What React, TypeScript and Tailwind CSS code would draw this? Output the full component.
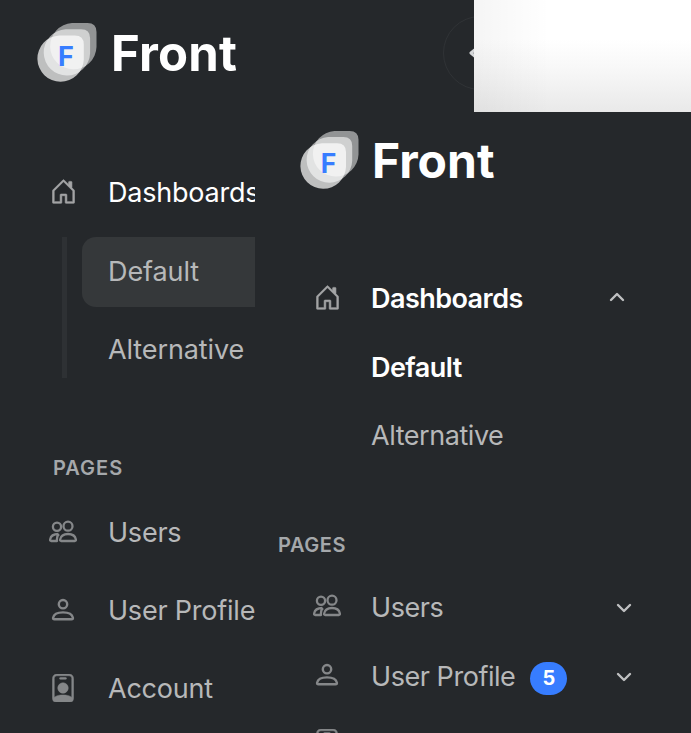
import type { ReactNode } from 'react';
import { BsHouseDoor, BsPersonBadge } from 'react-icons/bs';

const DROP = 'M22 0H37.5Q46.5 0 46.5 9V24A23.2 23.2 0 1 1 22 0Z';

function Mark({ className }: { className: string }) {
  return (
    <svg viewBox="0 0 60 59" className={className} fill="#fff">
      <path d={DROP} transform="translate(13 0)" opacity=".5" />
      <path d={DROP} transform="translate(6.6 6.2)" opacity=".56" />
      <path d={DROP} transform="translate(0.3 12.4)" opacity=".7" />
      <text x="21" y="43.2" fontFamily="Inter, sans-serif" fontSize="27" fontWeight="700" fill="#377dff">F</text>
    </svg>
  );
}

function House() {
  return <BsHouseDoor className="ml-px size-[27px] text-[#a4a5a6]" stroke="currentColor" strokeWidth={0.35} />;
}

function Badge() {
  return <BsPersonBadge stroke="currentColor" strokeWidth={0.3} />;
}

function Person() {
  return (
    <svg viewBox="0 0 28 28" className="size-7" fill="none" stroke="currentColor" strokeWidth="2.4" strokeLinejoin="round">
      <circle cx="14" cy="8.2" r="4.2" />
      <path d="M5.4 23.3Q3.9 23.3 4.1 21.8C4.9 17.9 9 16.4 14 16.4S23.1 17.9 23.9 21.8Q24.1 23.3 22.6 23.3Z" />
    </svg>
  );
}

function People() {
  return (
    <svg viewBox="0 0 28 28" className="size-7" fill="none" stroke="currentColor" strokeWidth="2.3" strokeLinejoin="round">
      <circle cx="19" cy="8.2" r="4.5" />
      <circle cx="8" cy="8.8" r="4.1" />
      <path d="M12.2 23Q10.9 23 11.1 21.6C11.8 17.8 14.8 16 19 16S26.2 17.8 26.9 21.6Q27.1 23 25.8 23Z" />
      <path d="M9.3 16C4.6 16 1.7 18 1.1 21.6Q.9 23 2.2 23H8C7.6 20 8.2 17.8 10 16.2" />
    </svg>
  );
}

function Chevron({ up = false }: { up?: boolean }) {
  return (
    <svg viewBox="0 0 16 10" className="h-[10px] w-4" fill="none" stroke="#bfc0c1" strokeWidth="2.4" strokeLinecap="round" strokeLinejoin="round">
      <path d={up ? 'M2 8L8 2L14 8' : 'M2 2L8 8L14 2'} />
    </svg>
  );
}

function LeftRow({ icon, children }: { icon: ReactNode; children: ReactNode }) {
  return (
    <div className="flex h-[78px] items-center pl-[49px]">
      <span className="mb-[3px] w-[59px] shrink-0 text-[28px] text-[#858789]">{icon}</span>
      <span className="mb-px tracking-[-0.22px]">{children}</span>
    </div>
  );
}

function RightRow({ icon, children, up, badge }: { icon?: ReactNode; children: ReactNode; up?: boolean; badge?: string }) {
  return (
    <div className="flex h-[69px] shrink-0 items-center pl-[58px]">
      <span className="mb-[3px] w-[58px] shrink-0 text-[28px] text-[#858789]">{icon}</span>
      <span>{children}</span>
      {badge && (
        <span className="ml-[15px] mt-[3px] flex h-[33px] w-[37px] items-center justify-center rounded-full bg-[#377dff] text-[20px] font-bold tracking-normal text-white">
          {badge}
        </span>
      )}
      {icon && (
        <span className={up ? 'mb-[3px] ml-auto mr-[66px]' : 'ml-auto mr-[59px]'}>
          <Chevron up={up} />
        </span>
      )}
    </div>
  );
}

export default function App() {
  return (
    <div className="flex h-[733px] w-[691px] overflow-hidden whitespace-nowrap bg-[#25282b] font-[Inter,sans-serif] text-[27px] leading-none text-[#b7b8b9]">
      <aside className="w-[255px] shrink-0 overflow-hidden">
        <div className="flex h-[154px] items-start pl-[37px] pt-[23px]">
          <Mark className="h-[59px] w-[60px] shrink-0" />
          <span className="ml-[14px] mt-[6px] text-[49px] font-bold tracking-[0.2px] text-white">Front</span>
        </div>
        <div className="text-white">
          <LeftRow icon={<House />}>Dashboards</LeftRow>
        </div>
        <div className="flex h-[156px] items-start pt-[5px]">
          <div className="ml-[62px] h-[141px] w-[5px] shrink-0 bg-[#2e3134]" />
          <div className="ml-[15px] grow tracking-[-0.1px]">
            <div className="flex h-[70px] items-center rounded-l-[14px] bg-[#35383a] pb-0.5 pl-[26px]">Default</div>
            <div className="mt-2 flex h-[70px] items-center pb-0.5 pl-[26px]">Alternative</div>
          </div>
        </div>
        <div className="flex h-[106px] items-center pl-[53px] pt-[54px] text-[20px] font-semibold tracking-[1px] text-[#a5a8ab]">PAGES</div>
        <LeftRow icon={<People />}>Users</LeftRow>
        <LeftRow icon={<Person />}>User Profile</LeftRow>
        <LeftRow icon={<Badge />}>Account</LeftRow>
      </aside>

      <main className="flex w-[436px] shrink-0 flex-col">
        <div className="flex h-[112px] shrink-0">
          <div className="w-[219px] overflow-hidden pl-[188px] pt-4">
            <div className="flex h-[74px] w-[74px] items-center rounded-full border border-[#303336] pl-[25px]">
              <svg viewBox="0 0 12 16" className="h-4 w-3" fill="none" stroke="#d5d7d9" strokeWidth="3" strokeLinecap="round" strokeLinejoin="round">
                <path d="M9 2L2 8L9 14" />
              </svg>
            </div>
          </div>
          <div className="w-[217px] bg-[linear-gradient(to_right,rgba(0,0,0,0.04),transparent_35%),linear-gradient(to_bottom,#fff_35%,#f8f8f8_60%,#e9e9e9)]" />
        </div>
        <div className="flex h-[152px] shrink-0 items-start pl-[45px] pt-[19px]">
          <Mark className="h-[58px] w-[59px] shrink-0" />
          <span className="ml-[13px] mt-[6px] text-[48px] font-bold text-white">Front</span>
        </div>
        <div className="shrink-0 font-semibold tracking-[-0.55px] text-white">
          <RightRow icon={<House />} up>Dashboards</RightRow>
          <RightRow>Default</RightRow>
        </div>
        <div className="-mt-px shrink-0 tracking-[-0.45px]">
          <RightRow>Alternative</RightRow>
          <div className="flex h-[103px] items-center pl-[23px] pt-[46px] text-[20px] font-semibold tracking-[0.6px] text-[#a5a8ab]">PAGES</div>
          <RightRow icon={<People />}>Users</RightRow>
          <RightRow icon={<Person />} badge="5">User Profile</RightRow>
        </div>
        <div className="shrink-0 pl-[58px] pt-[18px] text-[28px] text-[#858789]"><Badge /></div>
      </main>
    </div>
  );
}
